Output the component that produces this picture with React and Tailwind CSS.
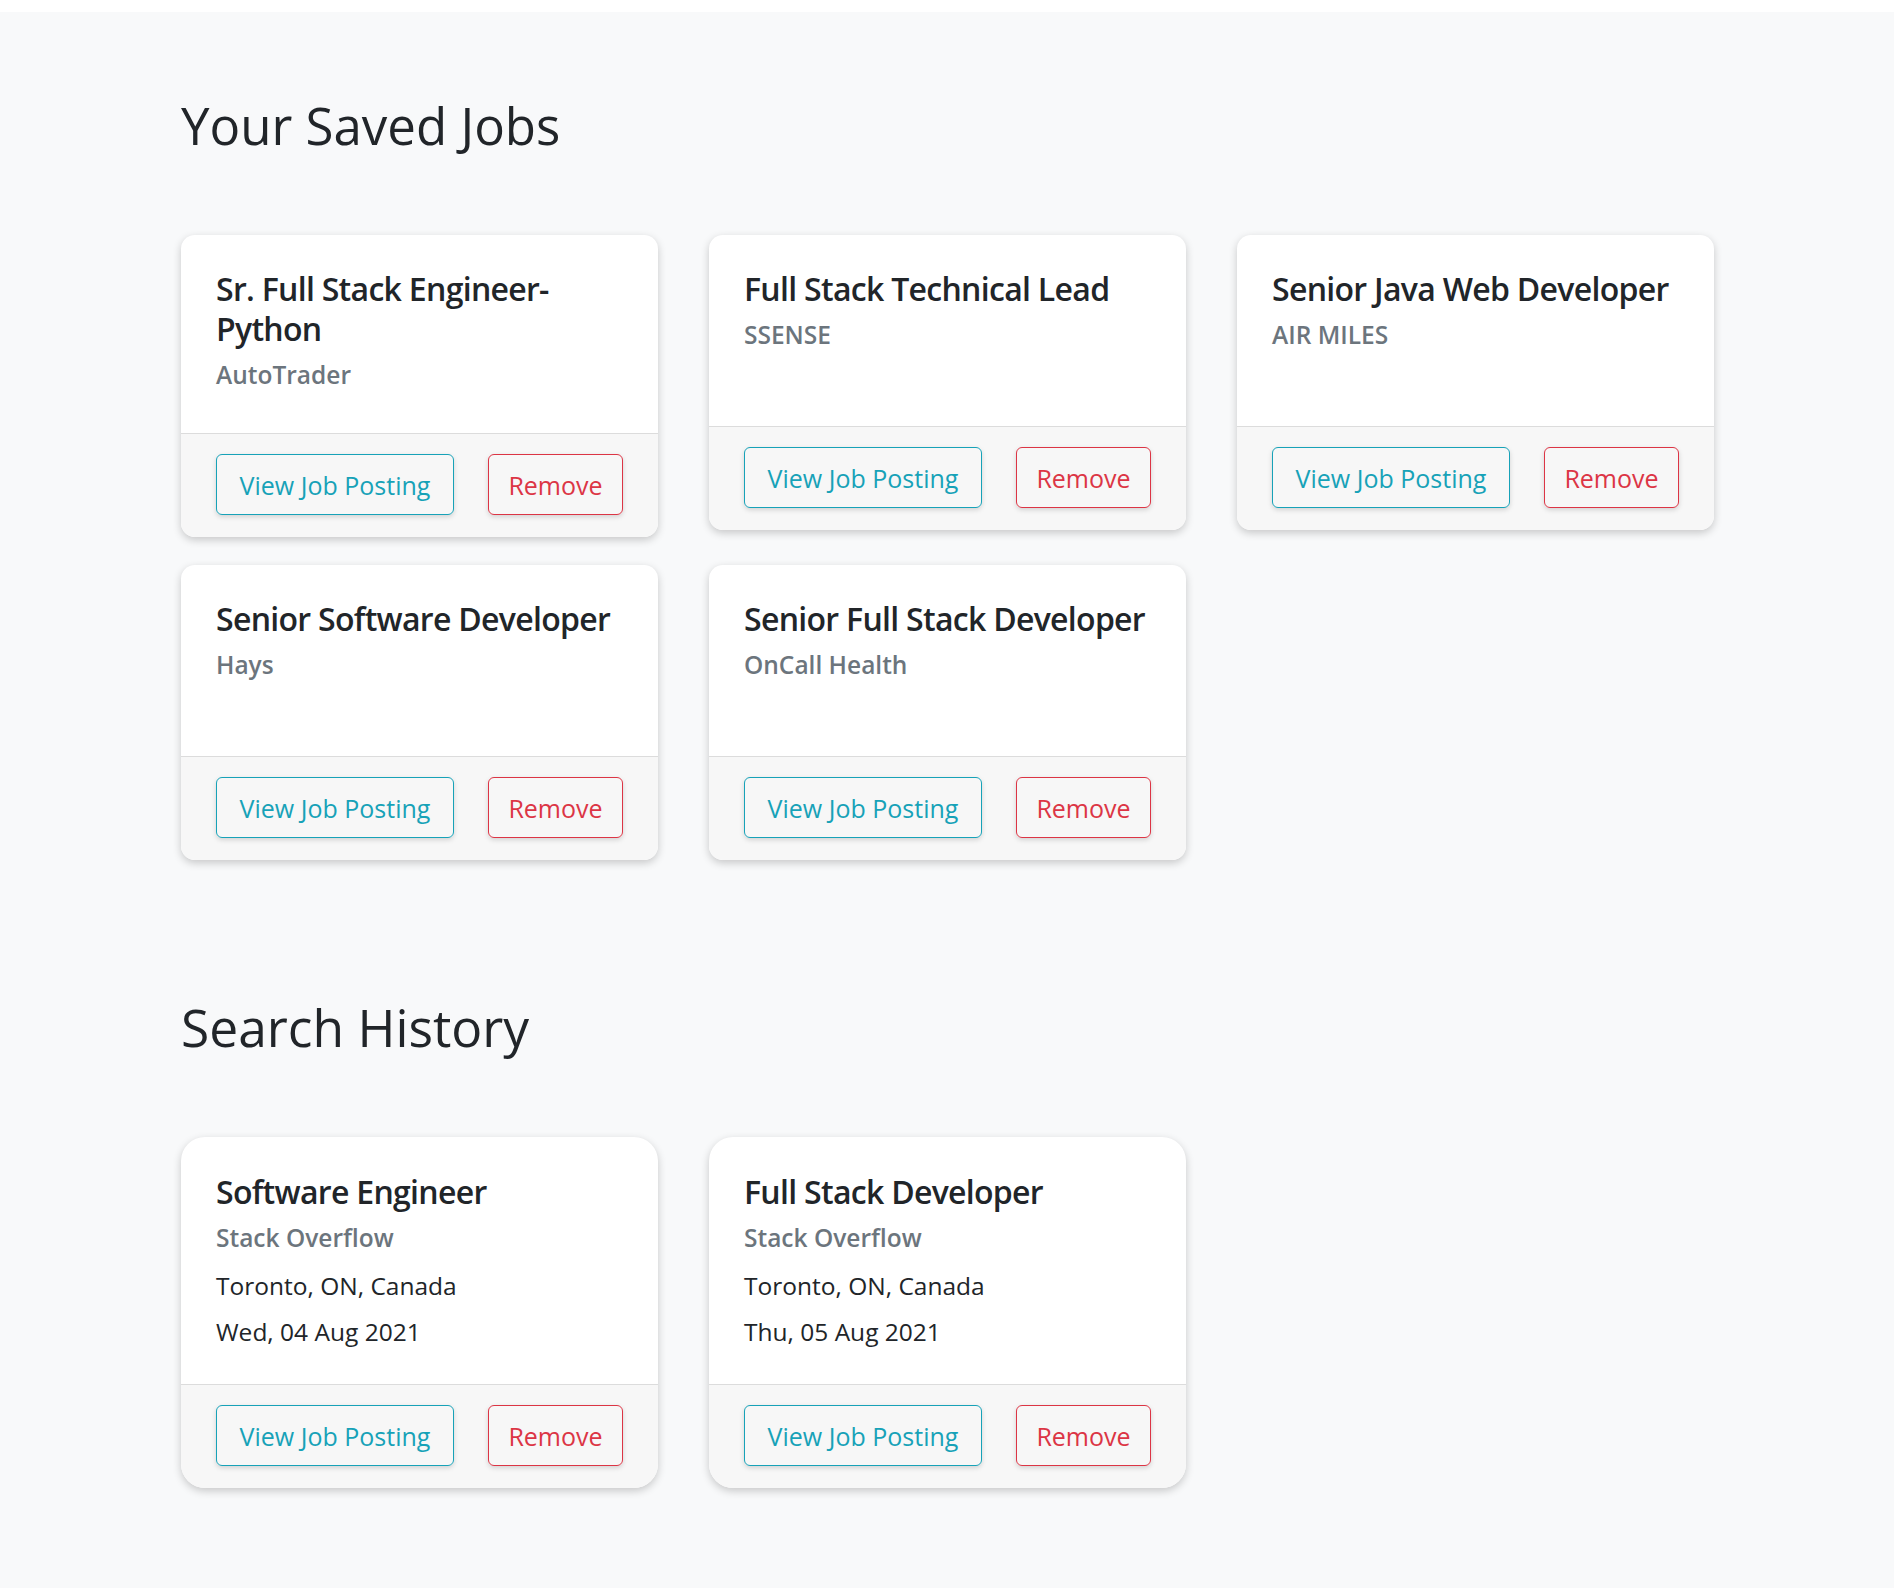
import React from "react";

const savedJobs = [
  { id: 1, title: "Sr. Full Stack Engineer-Python", company: "AutoTrader" },
  { id: 2, title: "Full Stack Technical Lead", company: "SSENSE" },
  { id: 3, title: "Senior Java Web Developer", company: "AIR MILES" },
  { id: 4, title: "Senior Software Developer", company: "Hays" },
  { id: 5, title: "Senior Full Stack Developer", company: "OnCall Health" },
];

const searchHistory = [
  {
    id: 1,
    title: "Software Engineer",
    company: "Stack Overflow",
    location: "Toronto, ON, Canada",
    date: "Wed, 04 Aug 2021",
  },
  {
    id: 2,
    title: "Full Stack Developer",
    company: "Stack Overflow",
    location: "Toronto, ON, Canada",
    date: "Thu, 05 Aug 2021",
  },
];

function CardFooter() {
  return (
    <div className="flex gap-[34px] border-t border-[#dcdcdc] bg-[#f7f7f7] px-[35px] pt-[20px] pb-[22px]">
      <button className="flex h-[61px] w-[238px] items-center justify-center rounded-[6px] border-[1.5px] border-[#17a2b8] pt-[2px] text-[25px] text-[#17a2b8] shadow-[0_2px_5px_rgba(0,0,0,0.15)]">
        View Job Posting
      </button>
      <button className="flex h-[61px] w-[135px] items-center justify-center rounded-[6px] border-[1.5px] border-[#dc3545] pt-[2px] text-[25px] text-[#dc3545] shadow-[0_2px_5px_rgba(0,0,0,0.15)]">
        Remove
      </button>
    </div>
  );
}

function SavedJobCard({ job }) {
  return (
    <div className="overflow-hidden rounded-[14px] bg-white shadow-[0_3px_9px_rgba(0,0,0,0.2)]">
      <div className="min-h-[191px] pl-[35px] pr-[28px] pt-[34px] pb-[43px]">
        <h5 className="text-[32px] leading-[40px] font-semibold tracking-[-0.7px] text-[#212529]">
          {job.title}
        </h5>
        <h6 className="mt-[11px] text-[24.5px] leading-[30px] font-semibold text-[#6c757d]">
          {job.company}
        </h6>
      </div>
      <CardFooter />
    </div>
  );
}

function SearchCard({ item }) {
  return (
    <div className="overflow-hidden rounded-[24px] bg-white shadow-[0_3px_9px_rgba(0,0,0,0.2)]">
      <div className="pl-[35px] pr-[28px] pt-[35px] pb-[37px]">
        <h5 className="text-[32px] leading-[40px] font-semibold tracking-[-0.7px] text-[#212529]">
          {item.title}
        </h5>
        <h6 className="mt-[11px] text-[24.5px] leading-[30px] font-semibold text-[#6c757d]">
          {item.company}
        </h6>
        <p className="mt-[18px] text-[24.5px] leading-[30px] text-[#212529]">{item.location}</p>
        <p className="mt-[16px] text-[24.5px] leading-[30px] text-[#212529]">{item.date}</p>
      </div>
      <CardFooter />
    </div>
  );
}

export default function App() {
  return (
    <div className="bg-white pt-[12px] font-['Open_Sans',sans-serif]">
      <div className="min-h-[1576px] bg-[#f8f9fa] pl-[181px] pt-[83px] pb-[100px]">
        <h1 className="text-[51px] leading-[60px] font-medium text-[#212529]">Your Saved Jobs</h1>
        <div className="mt-[80px] grid grid-cols-[repeat(3,477px)] items-start gap-x-[51px] gap-y-[28px]">
          {savedJobs.map((job) => (
            <SavedJobCard key={job.id} job={job} />
          ))}
        </div>

        <h1 className="mt-[137px] text-[51.5px] leading-[60px] font-medium text-[#212529]">Search History</h1>
        <div className="mt-[80px] grid grid-cols-[repeat(3,477px)] items-start gap-x-[51px] gap-y-[28px]">
          {searchHistory.map((item) => (
            <SearchCard key={item.id} item={item} />
          ))}
        </div>
      </div>
    </div>
  );
}
